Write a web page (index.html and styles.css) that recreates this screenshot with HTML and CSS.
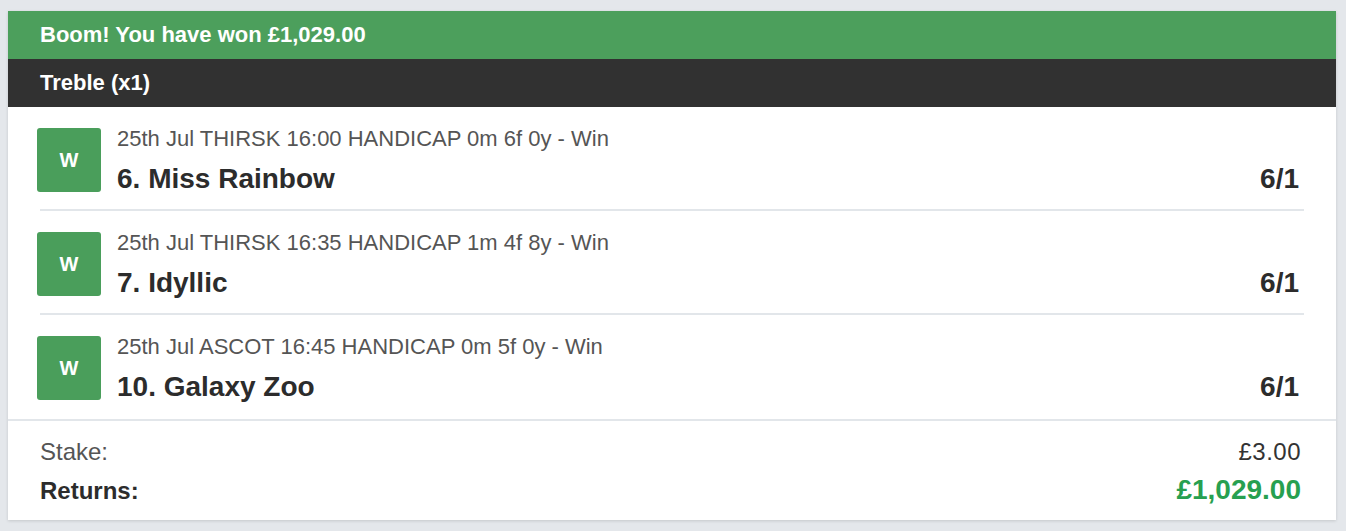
FILE: index.html
```html
<!DOCTYPE html>
<html lang="en">
<head>
<meta charset="utf-8">
<title>Bet receipt</title>
<link rel="stylesheet" href="styles.css">
</head>
<body>
<div class="card">
  <div class="banner">Boom! You have won £1,029.00</div>
  <div class="bet-type">Treble (x1)</div>
  <div class="legs">
    <div class="leg">
      <div class="badge">W</div>
      <div class="leg-info">
        <div class="race">25th Jul THIRSK 16:00 HANDICAP 0m 6f 0y - Win</div>
        <div class="selection"><span class="runner">6. Miss Rainbow</span><span class="odds">6/1</span></div>
      </div>
    </div>
    <div class="leg">
      <div class="badge">W</div>
      <div class="leg-info">
        <div class="race">25th Jul THIRSK 16:35 HANDICAP 1m 4f 8y - Win</div>
        <div class="selection"><span class="runner">7. Idyllic</span><span class="odds">6/1</span></div>
      </div>
    </div>
    <div class="leg">
      <div class="badge">W</div>
      <div class="leg-info">
        <div class="race">25th Jul ASCOT 16:45 HANDICAP 0m 5f 0y - Win</div>
        <div class="selection"><span class="runner">10. Galaxy Zoo</span><span class="odds">6/1</span></div>
      </div>
    </div>
  </div>
  <div class="totals">
    <div class="total-row stake"><span class="label">Stake:</span><span class="value">£3.00</span></div>
    <div class="total-row returns"><span class="label">Returns:</span><span class="value">£1,029.00</span></div>
  </div>
</div>
</body>
</html>
```
FILE: styles.css
```css
html, body {
  margin: 0;
  padding: 0;
}
body {
  background: #e4e7eb;
  padding: 11px 10px 11px 8px;
  font-family: "Liberation Sans", Arial, Helvetica, sans-serif;
  color: #2c2c2c;
}
.card {
  background: #fff;
  box-shadow: 0 1px 3px rgba(0, 0, 0, 0.14);
}
.banner {
  background: #4c9f5c;
  color: #fff;
  font-weight: bold;
  font-size: 22px;
  height: 48px;
  line-height: 48px;
  padding: 0 32px;
}
.bet-type {
  background: #313131;
  color: #fff;
  font-weight: bold;
  font-size: 22px;
  height: 48px;
  line-height: 48px;
  padding: 0 32px;
}
.legs {
  padding: 0 32px;
}
.leg {
  display: flex;
  align-items: center;
  gap: 16px;
  padding: 21px 0 17px;
  border-bottom: 2px solid #e2e6ea;
}
.leg:last-child {
  border-bottom: none;
  padding-bottom: 19px;
}
.badge {
  flex: none;
  width: 64px;
  height: 64px;
  margin-left: -3px;
  background: #4a9e5b;
  border-radius: 3px;
  color: #fff;
  font-weight: bold;
  font-size: 20px;
  display: flex;
  align-items: center;
  justify-content: center;
}
.leg-info {
  flex: 1;
  min-width: 0;
}
.race {
  font-size: 22px;
  line-height: 22px;
  color: #555;
  margin-bottom: 16px;
}
.selection {
  display: flex;
  justify-content: space-between;
  align-items: baseline;
  font-weight: bold;
  font-size: 28px;
  line-height: 26px;
  color: #2c2c2c;
  padding-right: 5px;
}
.totals {
  border-top: 2px solid #e2e6ea;
  padding: 17px 35px 13px 32px;
  display: flex;
  flex-direction: column;
  gap: 8px;
}
.total-row {
  display: flex;
  justify-content: space-between;
  align-items: baseline;
}
.stake {
  font-size: 24px;
  line-height: 28px;
  color: #555;
}
.stake .value {
  color: #333;
  letter-spacing: 0.5px;
}
.returns {
  line-height: 32px;
}
.returns .label {
  font-weight: bold;
  font-size: 24px;
  color: #2c2c2c;
}
.returns .value {
  font-weight: bold;
  font-size: 28px;
  color: #27a050;
}
```
